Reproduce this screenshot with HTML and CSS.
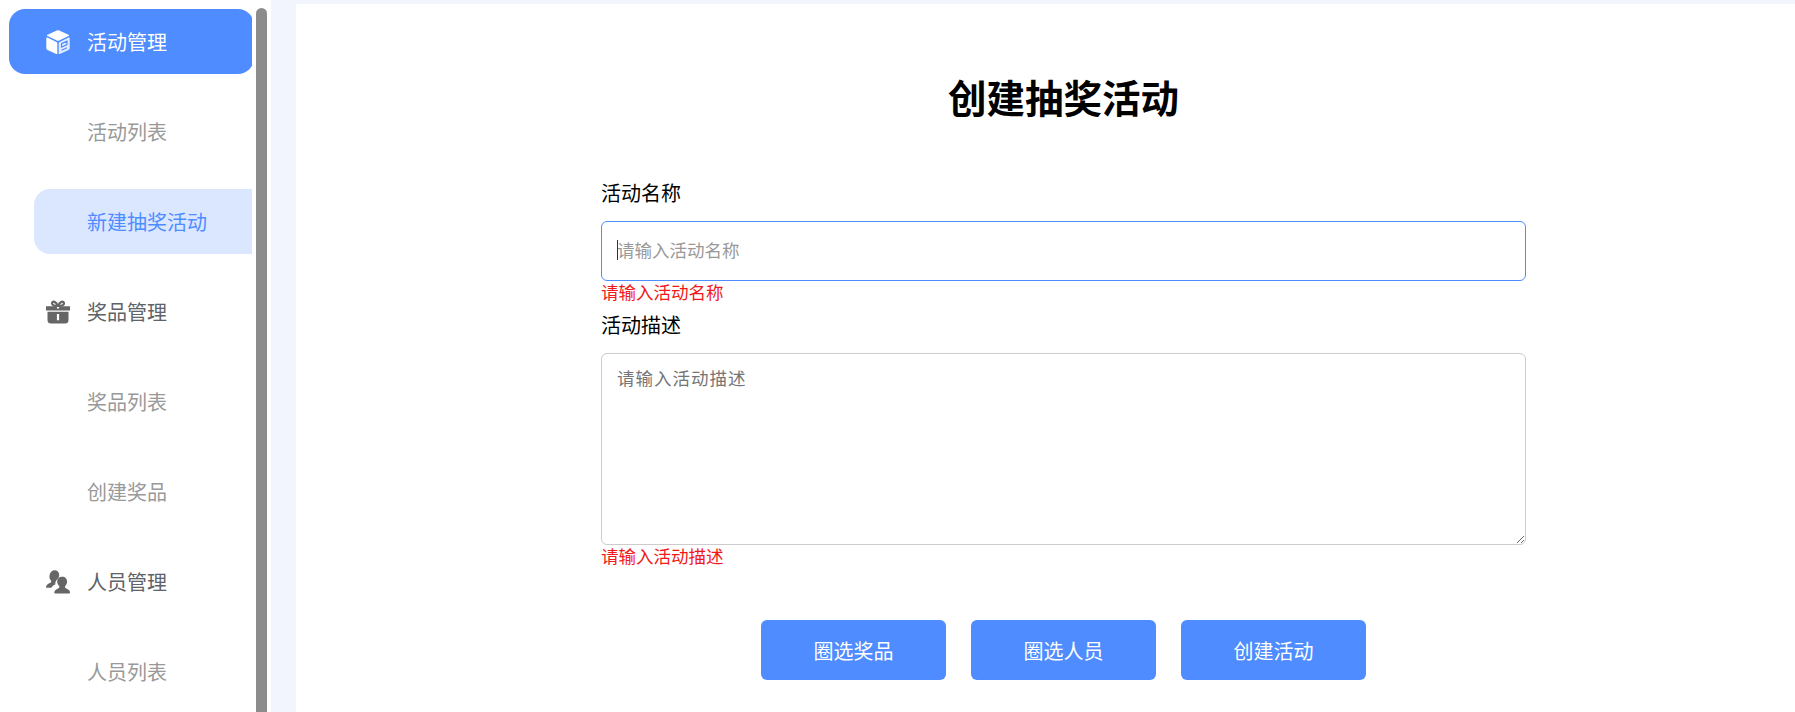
FILE: index.html
```html
<!DOCTYPE html>
<html lang="zh-CN">
<head>
<meta charset="utf-8">
<title>创建抽奖活动</title>
<link rel="stylesheet" href="styles.css">
</head>
<body>
<div class="app">
  <aside class="side">
    <nav class="menu">
      <a class="item top active">
        <svg class="ico" viewBox="0 0 24 24"><path fill="#fff" d="M10.800.5a2.500 2.500 0 0 1 2.400 0l9.300 4.200q1.200.7 0 1.400L13.200 10.500a2.500 2.500 0 0 1-2.400 0L1.500 6.100q-1.200-.7 0-1.400z"/><path fill="#fff" d="M.3 8.300q0-1.200 1.100-.7l9 4.300q.9.500.9 1.400v10q0 1.100-1.100.6l-8.700-3.900Q.3 19.400.3 18.200z"/><path fill="#e3ecff" d="M23.700 8.300q0-1.200-1.100-.7l-9 4.300q-.9.500-.9 1.400v10q0 1.100 1.100.6l8.700-3.900q1.200-.5 1.200-1.700z"/><path stroke="#4e8cff" stroke-width="1.200" fill="none" d="M15.500 13.600l5.500-2.500v3.400l-5.500 2.500zM15.500 20.200l5.500-2.500"/></svg>
        <span>活动管理</span>
      </a>
      <a class="item sub">活动列表</a>
      <a class="item sub current">新建抽奖活动</a>
      <a class="item top">
        <svg class="ico" viewBox="0 0 24 24"><path fill="none" stroke="#666" stroke-width="2.200" d="M11.500 6C9.500 6 6 5.500 6 3.300 6 .8 10.500 1 11.500 6zM12.500 6C14.500 6 18 5.500 18 3.300 18 .8 13.500 1 12.500 6z"/><path fill="#666" d="M0 6.200h24v4.300H0zM1.500 11.800h21V20q0 3.500-3.500 3.500H5q-3.500 0-3.500-3.500z"/><path fill="#fff" d="M10.900 14h2.200v6.200h-2.200zM10.900 7h2.200v1.500h-2.200z"/></svg>
        <span>奖品管理</span>
      </a>
      <a class="item sub">奖品列表</a>
      <a class="item sub">创建奖品</a>
      <a class="item top">
        <svg class="ico" viewBox="0 0 24 24"><path fill="#666" d="M8.500.2c3 0 5 2.300 4.700 5.300-.1 1.400-.8 2.600-1.600 3.400-1.700 1.400-2.500 3.400-2.300 5.500-1.700.7-3.200 1.700-4 3.300H.6c-.5 0-.7-.4-.6-1 .5-2.500 3.100-3.500 4.800-4.300.6-.7.500-1.600-.1-2.400C3.800 9.400 3.300 8 3.500 5.800 3.800 2.500 6 .2 8.500.2z"/><path fill="#666" d="M16.300 6.800c3 0 5 2.300 4.800 5.300-.1 1.500-.8 2.900-1.700 3.700-.6.800-.5 1.600.1 2.200 1.500.8 4 1.700 4.500 3.900.1.900-.2 1.500-.9 1.500H9.200c-.8 0-1.100-.6-.9-1.500.5-2.200 3-3.100 4.500-3.900.7-.6.800-1.400.2-2.200-1-.8-1.700-2.200-1.800-3.700-.2-3 1.800-5.300 5.100-5.300z"/></svg>
        <span>人员管理</span>
      </a>
      <a class="item sub">人员列表</a>
    </nav>
    <div class="thumb"></div>
  </aside>
  <main class="main">
    <h1 class="title">创建抽奖活动</h1>
    <form class="form">
      <label class="label">活动名称</label>
      <div class="field">
        <input class="control focus" type="text" placeholder="请输入活动名称">
        <i class="caret"></i>
      </div>
      <p class="err">请输入活动名称</p>
      <label class="label label2">活动描述</label>
      <textarea class="control area" placeholder="请输入活动描述"></textarea>
      <p class="err">请输入活动描述</p>
      <div class="actions">
        <button class="btn" type="button">圈选奖品</button>
        <button class="btn" type="button">圈选人员</button>
        <button class="btn" type="button">创建活动</button>
      </div>
    </form>
  </main>
</div>
</body>
</html>
```
FILE: styles.css
```css
* { box-sizing: border-box; }
html, body { margin: 0; height: 100%; overflow: hidden; }
body {
  background: #f2f5fd;
  font-family: "Noto Sans CJK SC", "Noto Sans", sans-serif;
  font-size: 20px;
  color: #000;
}
.app { display: flex; height: 712px; }
.side {
  flex: 0 0 271px;
  display: flex;
  background: #fff;
  height: 100%;
}
.menu {
  width: 252px;
  height: 100%;
  overflow: hidden;
  padding-top: 9px;
  flex: none;
}
.item {
  display: flex;
  align-items: center;
  height: 65px;
  margin-bottom: 25px;
  white-space: nowrap;
}
.top { margin-left: 9px; padding-left: 37px; color: #606266; }
.top span { margin-left: 17px; }
.sub { margin-left: 34px; padding-left: 53px; color: #999; }
.ico { width: 24px; height: 24px; flex: none; }
.active {
  width: 245px;
  background: #4e8cff;
  color: #fff;
  border-radius: 16px;
}
.current {
  background: #dbe7ff;
  color: #4e8cff;
  border-radius: 16px 0 0 16px;
}
.thumb {
  width: 11px;
  margin: 8px 4px 0 4px;
  background: #8c8c8c;
  border-radius: 6px 6px 0 0;
  flex: none;
}
.main {
  flex: 0 0 1499px;
  margin: 4px 0 0 25px;
  background: #fff;
  padding-left: 36px;
  display: flex;
  flex-direction: column;
  align-items: center;
}
.title {
  margin: 0;
  height: 116px;
  padding-top: 60px;
  font-size: 38.5px;
  line-height: 64px;
  font-weight: 700;
}
.form { width: 925px; margin-top: 59px; display: flex; flex-direction: column; }
.label { display: block; line-height: 28px; height: 28px; }
.label2 { margin-top: 8px; }
.field { position: relative; margin-top: 14px; }
.control {
  display: block;
  width: 100%;
  height: 60px;
  border: 1px solid #ccc;
  border-radius: 6px;
  padding: 0 15px 4px;
  background: #fff;
  font: inherit;
  font-size: 17.5px;
  outline: none;
}
.control::placeholder { color: #757575; opacity: 1; }
.focus { border-color: #4e8cff; }
.focus::placeholder { color: #999; }
.caret {
  position: absolute;
  left: 16px;
  top: 19px;
  width: 1px;
  height: 20px;
  background: #333;
}
.area {
  height: 192px;
  margin-top: 14px;
  padding: 10px 15px;
  letter-spacing: 1px;
  line-height: 28px;
  resize: both;
}
.err { margin: 0; color: #f01818; font-size: 17.5px; line-height: 21px; height: 22px; }
.actions {
  display: flex;
  justify-content: center;
  gap: 25px;
  margin-top: 53px;
}
.btn {
  width: 185px;
  height: 60px;
  border: 0;
  border-radius: 6px;
  background: #4e8cff;
  color: #fff;
  font: inherit;
  padding: 0;
}
```
